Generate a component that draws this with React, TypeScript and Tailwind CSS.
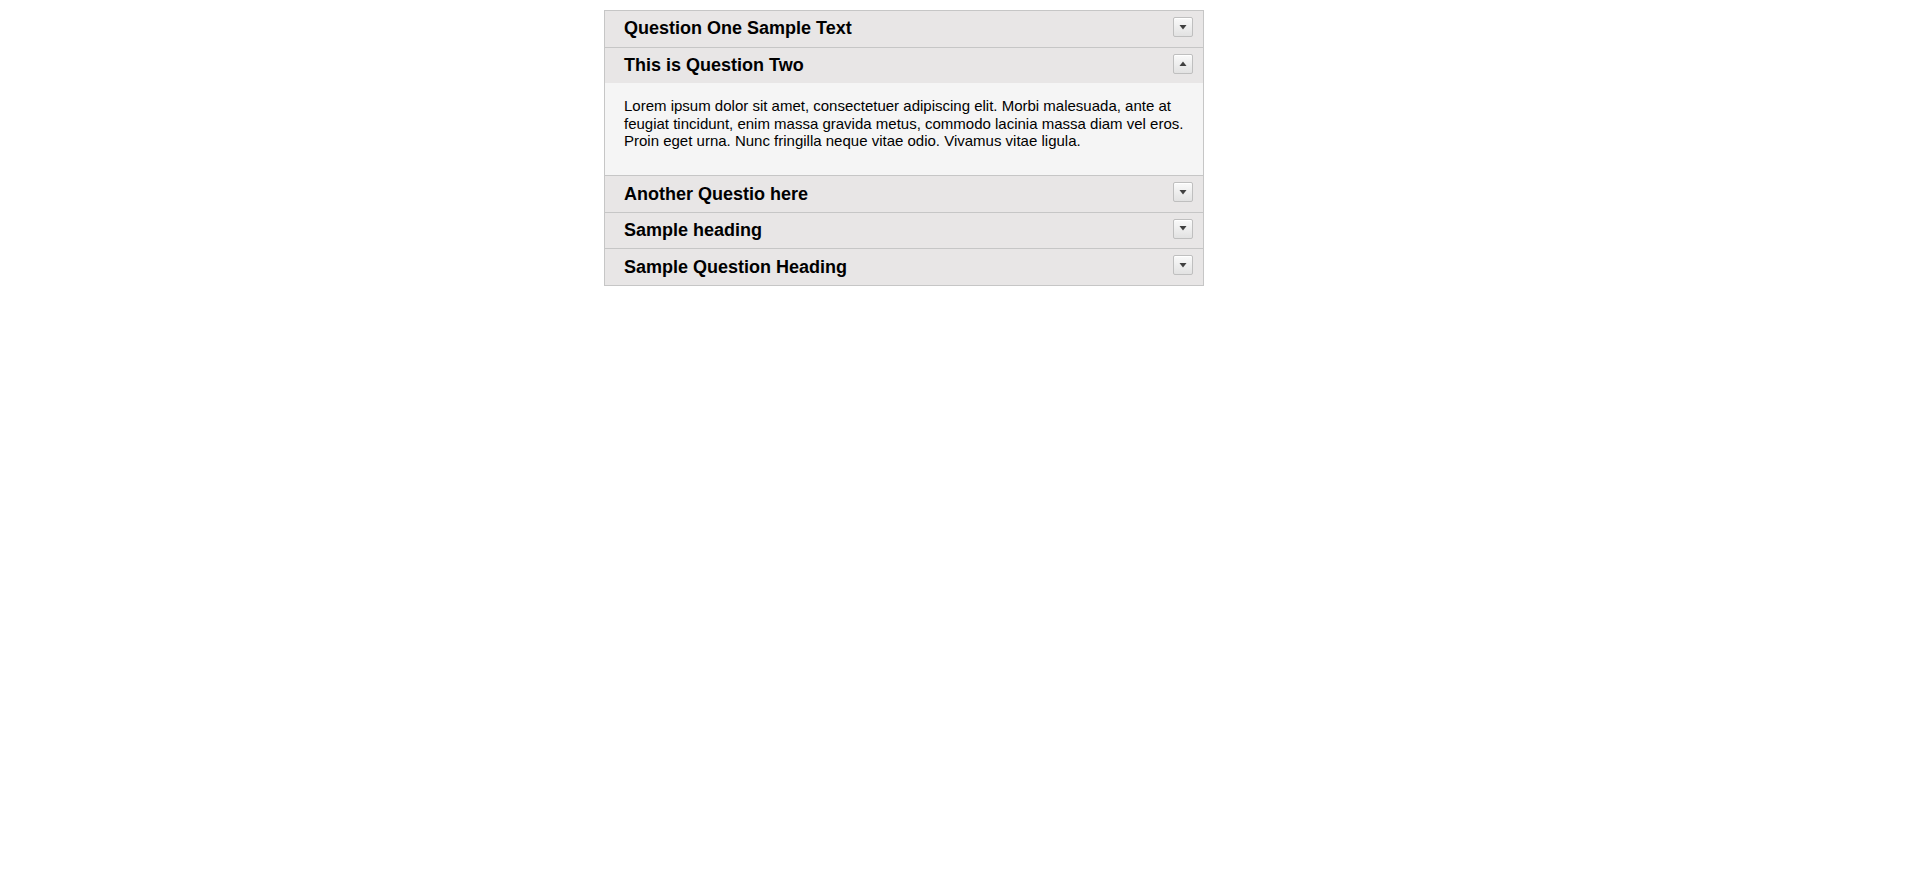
import { useState } from 'react';

const questions = [
  {
    title: 'Question One Sample Text',
    body: 'Lorem ipsum dolor sit amet, consectetuer adipiscing elit. Morbi malesuada, ante at feugiat tincidunt, enim massa gravida metus, commodo lacinia massa diam vel eros. Proin eget urna. Nunc fringilla neque vitae odio. Vivamus vitae ligula.',
  },
  {
    title: 'This is Question Two',
    body: 'Lorem ipsum dolor sit amet, consectetuer adipiscing elit. Morbi malesuada, ante at feugiat tincidunt, enim massa gravida metus, commodo lacinia massa diam vel eros. Proin eget urna. Nunc fringilla neque vitae odio. Vivamus vitae ligula.',
  },
  {
    title: 'Another Questio here',
    body: 'Lorem ipsum dolor sit amet, consectetuer adipiscing elit. Morbi malesuada, ante at feugiat tincidunt, enim massa gravida metus, commodo lacinia massa diam vel eros.',
  },
  {
    title: 'Sample heading',
    body: 'Proin eget urna. Nunc fringilla neque vitae odio. Vivamus vitae ligula.',
  },
  {
    title: 'Sample Question Heading',
    body: 'Lorem ipsum dolor sit amet, consectetuer adipiscing elit. Morbi malesuada, ante at feugiat tincidunt.',
  },
];

function ToggleIcon({ open }: { open: boolean }) {
  return (
    <span className="mt-[6px] flex h-[20px] w-[20px] shrink-0 items-center justify-center rounded-[2px] border border-[#bfbfbf] bg-gradient-to-b from-[#fafafa] to-[#e2e2e2] shadow-[inset_0_1px_0_#ffffff]">
      <svg width="8" height="5" viewBox="0 0 8 5">
        {open ? (
          <polygon points="0.5,5 7.5,5 4,0.5" fill="#404040" />
        ) : (
          <polygon points="0.5,0 7.5,0 4,4.5" fill="#404040" />
        )}
      </svg>
    </span>
  );
}

export default function App() {
  const [openIndex, setOpenIndex] = useState<number | null>(1);

  return (
    <div className="min-h-screen bg-white pt-[10px] font-['Liberation_Sans',Arial,sans-serif]">
      <div className="ml-[604px] w-[600px] border border-[#c6c6c6]">
        {questions.map((q, i) => {
          const open = openIndex === i;
          return (
            <div key={q.title} className={i > 0 ? 'border-t border-[#c6c6c6]' : ''}>
              {/* Header */}
              <button
                type="button"
                onClick={() => setOpenIndex(open ? null : i)}
                className="flex h-[35.67px] w-full cursor-pointer items-start justify-between bg-[#e8e6e6] pl-[19px] pr-[10px] text-left"
              >
                <span className="self-center text-[18px] leading-[1.15] font-bold text-black">{q.title}</span>
                <ToggleIcon open={open} />
              </button>

              {/* Panel */}
              {open && (
                <div className="bg-[#f5f5f5] pt-[14px] pr-[19px] pb-[26px] pl-[19px] text-[15px] leading-[1.15] text-black">
                  {q.body}
                </div>
              )}
            </div>
          );
        })}
      </div>
    </div>
  );
}
